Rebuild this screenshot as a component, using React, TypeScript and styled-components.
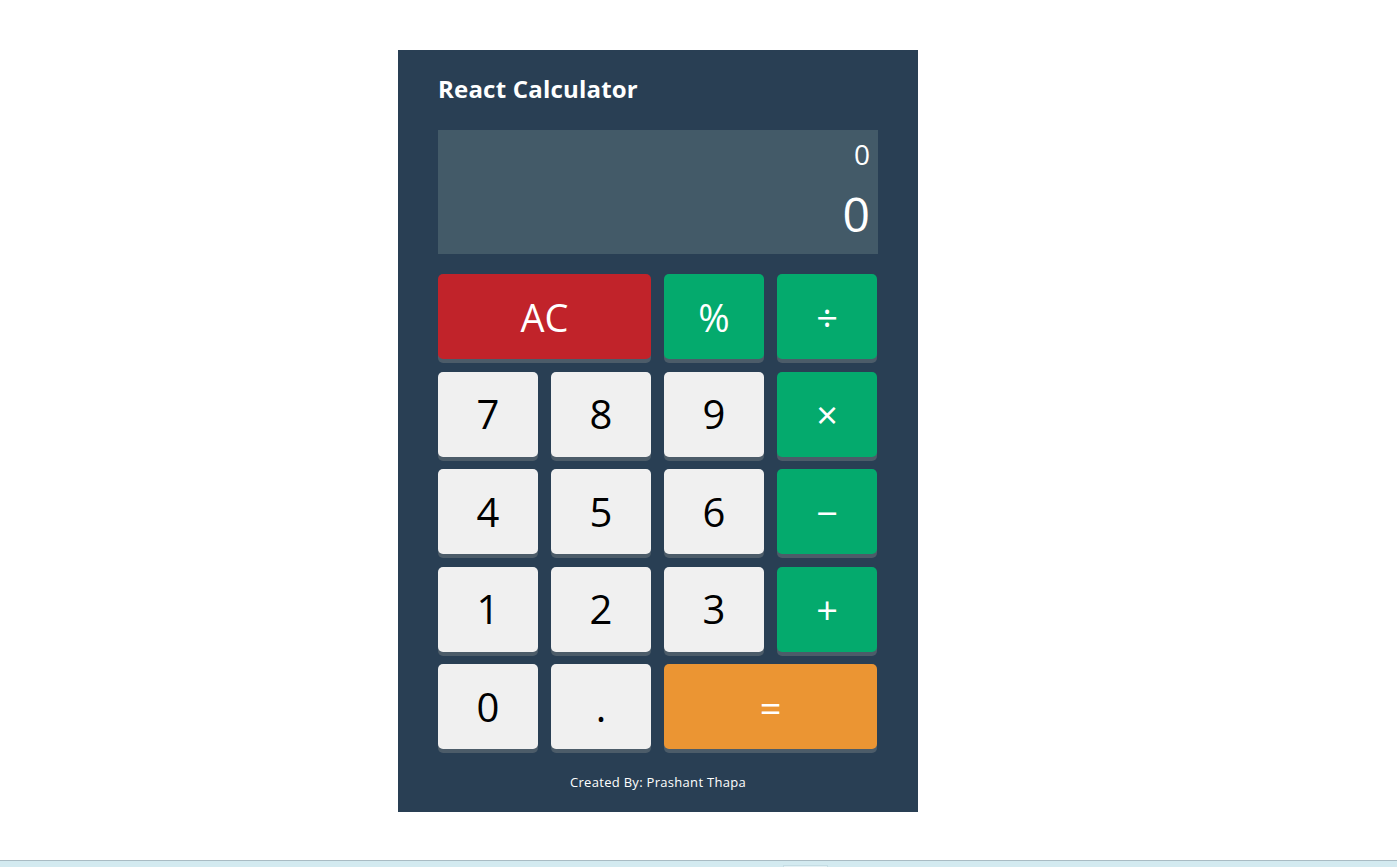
import React from "react";
import styled, { createGlobalStyle } from "styled-components";

const GlobalStyle = createGlobalStyle`
  html, body { margin: 0; padding: 0; background: #ffffff; }
  body { font-family: "Open Sans", "Noto Sans", sans-serif; }
  * { box-sizing: border-box; }
`;

const Page = styled.div`
  min-height: 100vh;
  display: flex;
  flex-direction: column;
  padding-top: 50px;
`;

const Calculator = styled.div`
  width: 520px;
  margin-left: 398px;
  background: #293f54;
  padding: 24px 40px 21px;
`;

const Title = styled.h1`
  margin: 0 0 26px;
  font-size: 24px;
  line-height: 30px;
  font-weight: 700;
  color: #ffffff;
  letter-spacing: 0.2px;
`;

const Display = styled.div`
  height: 124px;
  background: #435a68;
  padding: 7px 8px 12px;
  display: flex;
  flex-direction: column;
  justify-content: space-between;
  align-items: flex-end;
  color: #ffffff;
`;

const Previous = styled.div`
  font-size: 28px;
  line-height: 34px;
`;

const Current = styled.div`
  font-size: 48px;
  line-height: 56px;
`;

const Keys = styled.div`
  margin-top: 20px;
  display: grid;
  grid-template-columns: repeat(4, 100px);
  grid-auto-rows: 85px;
  column-gap: 13px;
  row-gap: 12.5px;
`;

type Variant = "num" | "op" | "clear" | "equals";

const colors: Record<Variant, { bg: string; fg: string }> = {
  num: { bg: "#f0f0f0", fg: "#000000" },
  op: { bg: "#04aa6d", fg: "#ffffff" },
  clear: { bg: "#c1232a", fg: "#ffffff" },
  equals: { bg: "#eb9533", fg: "#ffffff" },
};

const Key = styled.button<{ $variant: Variant; $wide?: boolean }>`
  grid-column: span ${(p) => (p.$wide ? 2 : 1)};
  border: none;
  border-radius: 5px;
  background: ${(p) => colors[p.$variant].bg};
  color: ${(p) => colors[p.$variant].fg};
  box-shadow: 0 4px 0 #4c5c69;
  font-family: "Open Sans", "Noto Sans", sans-serif;
  font-size: ${(p) => (p.$variant === "num" ? "40px" : "38px")};
  font-weight: ${(p) => (p.$variant === "op" || p.$variant === "equals" ? 500 : 400)};
  line-height: 1;
  display: flex;
  align-items: center;
  justify-content: center;
  padding: 0;
  cursor: pointer;
`;

const Credit = styled.p`
  margin: 24px 0 0;
  text-align: center;
  font-size: 13px;
  line-height: 18px;
  letter-spacing: 0.3px;
  color: #ffffff;
`;

const BottomStrip = styled.div`
  margin-top: auto;
  height: 7px;
  border-top: 1px solid #a9bbc3;
  background: #d3eaf0;
  display: flex;
  padding-left: 783px;
`;

const StripTab = styled.div`
  width: 45px;
  height: 6px;
  margin-top: 4px;
  background: #e2f1f5;
  border: 1px solid #c5dde4;
  border-bottom: none;
`;

const keys: { label: string; variant: Variant; wide?: boolean }[] = [
  { label: "AC", variant: "clear", wide: true },
  { label: "%", variant: "op" },
  { label: "÷", variant: "op" },
  { label: "7", variant: "num" },
  { label: "8", variant: "num" },
  { label: "9", variant: "num" },
  { label: "×", variant: "op" },
  { label: "4", variant: "num" },
  { label: "5", variant: "num" },
  { label: "6", variant: "num" },
  { label: "−", variant: "op" },
  { label: "1", variant: "num" },
  { label: "2", variant: "num" },
  { label: "3", variant: "num" },
  { label: "+", variant: "op" },
  { label: "0", variant: "num" },
  { label: ".", variant: "num" },
  { label: "=", variant: "equals", wide: true },
];

export default function App() {
  return (
    <>
      <GlobalStyle />
      <Page>
        <Calculator>
          <Title>React Calculator</Title>
          <Display>
            <Previous>0</Previous>
            <Current>0</Current>
          </Display>
          <Keys>
            {keys.map((k) => (
              <Key key={k.label} $variant={k.variant} $wide={k.wide}>
                {k.label}
              </Key>
            ))}
          </Keys>
          <Credit>Created By: Prashant Thapa</Credit>
        </Calculator>
        <BottomStrip>
          <StripTab />
        </BottomStrip>
      </Page>
    </>
  );
}
